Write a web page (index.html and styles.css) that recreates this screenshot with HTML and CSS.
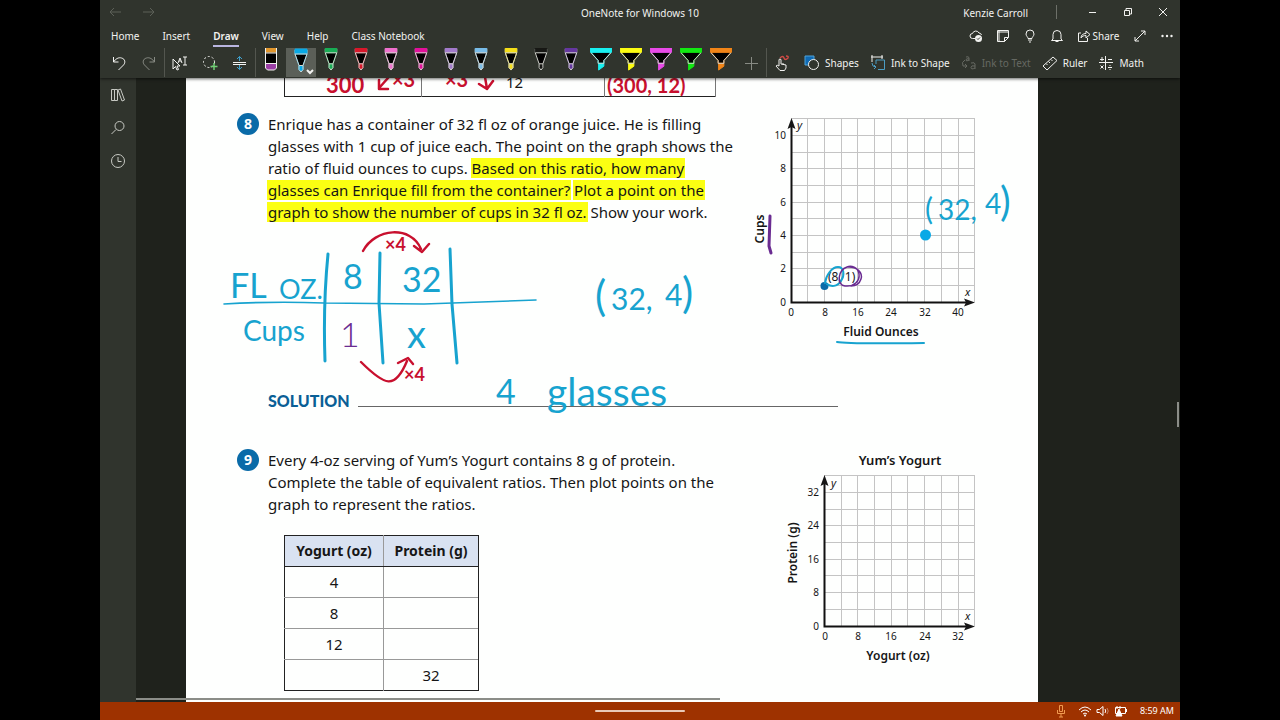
FILE: index.html
```html
<!DOCTYPE html>
<html lang="en">
<head>
<meta charset="utf-8">
<title>OneNote for Windows 10</title>
<link rel="stylesheet" href="styles.css">
</head>
<body>
<svg class="defs" aria-hidden="true">
  <defs>
    <symbol id="pen" viewBox="0 0 14 24">
      <path d="M1 5 5 16.500v4L7 23l2-2.500v-4L13 5z" fill="#000"/>
      <path d="M5.200 16.500h3.600v4L7 23l-1.800-2.500z" fill="currentColor"/>
      <path d="M1 1v4l4 11.500v4L7 23l2-2.500v-4L13 5V1M5 16.500h4" fill="none" stroke="#d4d6d0"/>
      <path d="M1 0h12v4.500H1z" fill="currentColor"/>
      <path d="M1 5h12" stroke="#d4d6d0"/>
    </symbol>
    <symbol id="marker" viewBox="0 0 22 24">
      <path d="M1 4v1l7 8v3h6v-3l7-8V4z" fill="#000"/>
      <path d="M8.500 16h5.500v3l-5.500 4z" fill="currentColor"/>
      <path d="M1 4v1.500l7 7.500v3h6v-3l7-7.500V4" fill="none" stroke="#d4d6d0"/>
      <path d="M0 0h22v4.500H0z" fill="currentColor"/>
    </symbol>
  </defs>
</svg>
<div class="app">
  <header class="chrome">
    <div class="titlebar">
      <div class="history">
        <button aria-label="Back"><svg width="14" height="10" viewBox="0 0 14 10"><path d="M5 1 1 5l4 4M1 5h11"/></svg></button>
        <button aria-label="Forward"><svg width="14" height="10" viewBox="0 0 14 10"><path d="m8 1 4 4-4 4M12 5H1"/></svg></button>
      </div>
      <div class="title">OneNote for Windows 10</div>
      <div class="window">
        <span class="user">Kenzie Carroll</span>
        <button aria-label="Minimize"><svg width="10" height="10" viewBox="0 0 10 10"><path d="M1 5.500h7"/></svg></button>
        <button aria-label="Restore"><svg width="10" height="10" viewBox="0 0 10 10"><path d="M1.500 3.500h5v5h-5zM3 3V1.500h5.500V7H7"/></svg></button>
        <button aria-label="Close"><svg width="10" height="10" viewBox="0 0 10 10"><path d="m1 1 8 8M9 1 1 9"/></svg></button>
      </div>
    </div>
    <div class="tabbar">
      <nav class="tabs">
        <button>Home</button><button>Insert</button><button class="active">Draw</button><button>View</button><button>Help</button><button>Class Notebook</button>
      </nav>
      <div class="actions">
        <button aria-label="Sync"><svg width="14" height="14" viewBox="0 0 14 14"><path d="M6 9.500H3.500a2.500 2.500 0 0 1 0-5 3.500 3.500 0 0 1 6.500-.5 2.600 2.600 0 0 1 2.500 2"/><circle cx="9.500" cy="9.500" r="3.500" fill="#f2f2f0" stroke="none"/><path d="m8 9.500 1 1 2-2" stroke="#30342d"/></svg></button>
        <button aria-label="Feed"><svg width="14" height="14" viewBox="0 0 14 14"><path d="M1.500 1.500h11v7l-4 4h-7zM12.500 8.500h-4v4M1.500 3h11M3 2v10"/></svg></button>
        <button aria-label="Tell me"><svg width="14" height="14" viewBox="0 0 14 14"><path d="M5 9.500C5 8 3 7 3 5a4 4 0 0 1 8 0c0 2-2 3-2 4.500zM5 11h4M6 13h2"/></svg></button>
        <button aria-label="Notifications"><svg width="14" height="14" viewBox="0 0 14 14"><path d="M3 10V5.500a4 4 0 0 1 8 0V10l1.500 1.500h-11zM5.500 12.500h3"/></svg></button>
        <button class="share"><svg width="14" height="14" viewBox="0 0 14 14"><path d="M4 4H1.500v8.500h9V9M4 9c0-3 2-4.500 5-4.500V2l4 3.500L9 9V6.500C7 6.500 5 7 4 9z"/></svg>Share</button>
        <button aria-label="Full screen"><svg width="14" height="14" viewBox="0 0 14 14"><path d="m2 12 10-10M8 2h4v4M2 8v4h4"/></svg></button>
        <button aria-label="More"><svg width="14" height="14" viewBox="0 0 14 14"><g fill="#f2f2f0" stroke="none"><circle cx="2.500" cy="7" r="1.200"/><circle cx="7" cy="7" r="1.200"/><circle cx="11.500" cy="7" r="1.200"/></g></svg></button>
      </div>
    </div>
    <div class="tools">
      <button aria-label="Undo"><svg width="16" height="16" viewBox="0 0 16 16"><path d="M2.500 2v5h5M2.500 7c2-3 5-5 8-4 4 1 4 5 2 7l-5 5"/></svg></button>
      <button aria-label="Redo" class="dim"><svg width="16" height="16" viewBox="0 0 16 16"><path d="M13.500 2v5h-5M13.500 7c-2-3-5-5-8-4-4 1-4 5-2 7l5 5"/></svg></button>
      <button aria-label="Select objects or type text" class="sep"><svg width="16" height="16" viewBox="0 0 16 16"><path d="M1 4v10l2.500-2.500L5 15l1.500-.5L5 11h3zM6 8l2-5 2 5M7 6h2M11 2h4M13 2v8M11 10h4"/></svg></button>
      <button aria-label="Lasso select"><svg width="16" height="16" viewBox="0 0 16 16"><circle cx="7" cy="7" r="5.500" stroke-dasharray="2 2"/><path d="M12 8v7M8.500 11.500h7" stroke="#6fce74" stroke-width="1.500"/></svg></button>
      <button aria-label="Insert or remove space"><svg width="16" height="16" viewBox="0 0 16 16"><path d="M1 7.500h13M1 9.500h13"/><path d="M7.500 6V1.500M5 4l2.500-2.500L10 4M7.500 10v4.500M5 12l2.500 2.500L10 12" stroke="#3fa0cc"/></svg></button>
      <button aria-label="Eraser" class="sep top"><svg width="14" height="24" viewBox="0 0 14 24"><path d="M1.500 0h11v4.500h-11z" fill="#e0962c" stroke="none"/><path d="M1.500 5h11v10h-11z" fill="#000" stroke="none"/><path d="M1.500 15.500h11V20l-2 2h-7l-2-2z" fill="#9b3fa6"/><path d="M1.500 0v16M12.500 0v16M1.500 5h11"/></svg></button>
      <button aria-label="Light blue pen" class="top on"><svg class="c-blue" width="14" height="26"><use href="#pen"/></svg><svg class="chev" width="8" height="6" viewBox="0 0 8 6"><path d="m1 1 3 3 3-3"/></svg></button>
      <button aria-label="Green pen" class="top"><svg class="c-green" width="14" height="23"><use href="#pen"/></svg></button>
      <button aria-label="Red pen" class="top"><svg class="c-red" width="14" height="23"><use href="#pen"/></svg></button>
      <button aria-label="Pink pen" class="top"><svg class="c-pink" width="14" height="23"><use href="#pen"/></svg></button>
      <button aria-label="Magenta pen" class="top"><svg class="c-magenta" width="14" height="23"><use href="#pen"/></svg></button>
      <button aria-label="Lavender pen" class="top"><svg class="c-lavender" width="14" height="23"><use href="#pen"/></svg></button>
      <button aria-label="Sky pen" class="top"><svg class="c-sky" width="14" height="23"><use href="#pen"/></svg></button>
      <button aria-label="Yellow pen" class="top"><svg class="c-yellow" width="14" height="23"><use href="#pen"/></svg></button>
      <button aria-label="Black pen" class="top"><svg class="c-black" width="14" height="23"><use href="#pen"/></svg></button>
      <button aria-label="Purple pen" class="top"><svg class="c-purple" width="14" height="23"><use href="#pen"/></svg></button>
      <button aria-label="Aqua highlighter" class="top"><svg class="c-aqua" width="22" height="23"><use href="#marker"/></svg></button>
      <button aria-label="Yellow highlighter" class="top"><svg class="c-lemon" width="22" height="23"><use href="#marker"/></svg></button>
      <button aria-label="Pink highlighter" class="top"><svg class="c-violet" width="22" height="23"><use href="#marker"/></svg></button>
      <button aria-label="Green highlighter" class="top"><svg class="c-lime" width="22" height="23"><use href="#marker"/></svg></button>
      <button aria-label="Orange highlighter" class="top"><svg class="c-orange" width="22" height="23"><use href="#marker"/></svg></button>
      <button aria-label="Add pen" class="dim"><svg width="14" height="14" viewBox="0 0 14 14"><path d="M7.500 1v13M1 7.500h13"/></svg></button>
      <button aria-label="Draw with touch" class="sep"><svg width="16" height="16" viewBox="0 0 16 16"><path d="M5 11V4.500q1-1 2 0V9l5 1v3l-1.500 2.500H6L2 11q1-1.500 3 0M9 9.500V8"/><path d="M6 3q3-3 4 0t4 0q1-2-2-2" stroke="#d04a45" stroke-width="1.400"/></svg></button>
      <button class="wide"><svg width="16" height="16" viewBox="0 0 16 16"><path d="M1 1h9v9H1z" fill="#0f6ab4" stroke="#4fa2d8"/><circle cx="9.500" cy="9.500" r="5" fill="#30342d"/></svg>Shapes</button>
      <button class="wide"><svg width="16" height="16" viewBox="0 0 16 16"><path d="M1 2h12M2 0v4M12 0v4M2 4v3"/><path d="M6 5h8.500v9.500H8M6 5v4M2 8q0 4 4 4M4 10l2 2-2 2" stroke="#4b9dc4"/></svg>Ink to Shape</button>
      <button class="wide" disabled><svg width="16" height="16" viewBox="0 0 16 16"><path d="M5 2q3-1 3 1v3M8 4q-3-1-3 1t3 0M10 8q4-1 4 1v5M14 11q-4-1-4 1.500t4 .5M4 5q-4 2-2 6h4M4 9l2 2-2 2"/></svg>Ink to Text</button>
      <button class="wide"><svg width="16" height="16" viewBox="0 0 16 16"><path d="m1 11 10-9 4 3.500L5 15zM4 8.500l1.500 1.500M6.500 6.500 8 8M9 4.500l1.500 1.500"/></svg>Ruler</button>
      <button class="wide"><svg width="16" height="16" viewBox="0 0 16 16"><path d="M7.500 1v14M1 7.500h14M2 4.500h4M4 2v4M10 4.500h4M2.500 10.500l3 3M5.500 10.500l-3 3M10 12.500h4M12 10v1M12 14v1"/></svg>Math</button>
    </div>
  </header>
  <div class="body">
    <aside class="rail">
      <button aria-label="Notebooks"><svg width="16" height="14" viewBox="0 0 16 14"><path d="M1.500 1.500h3v11h-3zM4.500 1.500h3v11h-3zM8 2l2.500-1 4 11-2.500 1z"/></svg></button>
      <button aria-label="Search"><svg width="16" height="16" viewBox="0 0 16 16"><circle cx="9.500" cy="6" r="4.500"/><path d="M6 9.500 1.500 14"/></svg></button>
      <button aria-label="Recent"><svg width="16" height="16" viewBox="0 0 16 16"><circle cx="8" cy="8" r="6.500"/><path d="M8 4v4.500h3.500"/></svg></button>
    </aside>
    <main class="canvas">
      <article class="page">
        <table class="prior"><tr><td></td><td>12</td><td></td></tr></table>
        <section class="problem">
          <span class="badge">8</span>
          <p>Enrique has a container of 32 fl oz of orange juice. He is filling<br>glasses with 1 cup of juice each. The point on the graph shows the<br>ratio of fluid ounces to cups. <mark>Based on this ratio, how many</mark><br><mark>glasses can Enrique fill from the container?</mark> <mark>Plot a point on the</mark><br><mark>graph to show the number of cups in 32 fl oz.</mark> Show your work.</p>
          <svg class="graph" width="290" height="236" viewBox="740 110 290 236" role="img" aria-label="Graph of cups against fluid ounces">
            <path class="grid" d="M807.500 119v183M824.500 119v183M841.500 119v183M857.500 119v183M874.500 119v183M891.500 119v183M907.500 119v183M924.500 119v183M941.500 119v183M958.500 119v183M974.500 119v183M791 118.500h184M791 135.500h184M791 152.500h184M791 168.500h184M791 185.500h184M791 202.500h184M791 218.500h184M791 235.500h184M791 252.500h184M791 268.500h184M791 285.500h184"/>
            <path class="axis" d="M791.500 125v177.500H969"/>
            <path d="m791.500 118 4 11-4-2-4 2zM975 302.500l-11 4 2-4-2-4z"/>
            <g class="tick end"><text x="786" y="139">10</text><text x="786" y="172">8</text><text x="786" y="206">6</text><text x="786" y="239">4</text><text x="786" y="272">2</text><text x="786" y="306">0</text></g>
            <g class="tick mid"><text x="791" y="316">0</text><text x="825" y="316">8</text><text x="858" y="316">16</text><text x="891" y="316">24</text><text x="925" y="316">32</text><text x="958" y="316">40</text></g>
            <text class="var" x="797" y="129">y</text><text class="var" x="965" y="296">x</text>
            <text class="name" x="881" y="336">Fluid Ounces</text>
            <text class="name" transform="translate(764 229) rotate(-90)">Cups</text>
            <text class="coord" x="828" y="281">(8, 1)</text>
            <circle cx="824.500" cy="286" r="4" fill="#0a6ba8"/>
          </svg>
        </section>
        <div class="solution"><b>SOLUTION</b><span></span></div>
        <section class="problem">
          <span class="badge">9</span>
          <div>
            <p>Every 4-oz serving of Yum’s Yogurt contains 8 g of protein.<br>Complete the table of equivalent ratios. Then plot points on the<br>graph to represent the ratios.</p>
            <table class="ratios">
              <thead><tr><th scope="col">Yogurt (oz)</th><th scope="col">Protein (g)</th></tr></thead>
              <tbody>
                <tr><td>4</td><td></td></tr>
                <tr><td>8</td><td></td></tr>
                <tr><td>12</td><td></td></tr>
                <tr><td></td><td>32</td></tr>
              </tbody>
            </table>
          </div>
          <svg class="graph" width="290" height="222" viewBox="740 445 290 222" role="img" aria-label="Blank graph of protein against yogurt">
            <path class="grid" d="M841.500 475v150M857.500 475v150M874.500 475v150M891.500 475v150M907.500 475v150M924.500 475v150M941.500 475v150M958.500 475v150M974.500 475v150M824 474.500h151M824 491.500h151M824 508.500h151M824 524.500h151M824 541.500h151M824 558.500h151M824 574.500h151M824 591.500h151M824 608.500h151"/>
            <path class="axis" d="M824.500 481v144.500H969"/>
            <path d="m824.500 474 4 11-4-2-4 2zM975 625.500l-11 4 2-4-2-4z"/>
            <g class="tick end"><text x="819" y="495">32</text><text x="819" y="528">24</text><text x="819" y="562">16</text><text x="819" y="595">8</text><text x="819" y="629">0</text></g>
            <g class="tick mid"><text x="825" y="639">0</text><text x="858" y="639">8</text><text x="891" y="639">16</text><text x="925" y="639">24</text><text x="958" y="639">32</text></g>
            <text class="var" x="831" y="486">y</text><text class="var" x="965" y="619">x</text>
            <text class="name large" x="900" y="464">Yum’s Yogurt</text>
            <text class="name" x="898" y="659">Yogurt (oz)</text>
            <text class="name" transform="translate(797 552) rotate(-90)">Protein (g)</text>
          </svg>
        </section>
        <svg class="ink" width="852" height="624" viewBox="186 78 852 624">
          <g class="lines blue">
            <path d="M224 304q50-3 100-1l100 1q60-2 112-4" stroke-width="1.600"/>
            <path d="M328 254q-5 50-3 107M380 253l-1 50 4 60M450 249l2 55 5 59" stroke-width="3"/>
            <path d="M837 342q10 2 87 1" stroke-width="2"/>
            <path d="M825 283c1-8 7-16 13-16s7 8 3 14-10 6-14 3" stroke-width="2"/>
          </g>
          <circle cx="925.500" cy="235" r="5.500" fill="#08a9e6" stroke="none"/>
          <g class="lines red">
            <path d="M363 251c12-23 48-26 58-2M414 246l8 6 7-8M361 362c24 24 34 28 46-1M398 363l10-5 5 6" stroke-width="2.400"/>
            <path d="m388 78-8 9M379 80v9h9M485 77l2 12M479 84l8 5 6-8" stroke-width="2.500"/>
          </g>
          <g class="lines purple">
            <path d="M770 216l-1 30 2 7" stroke-width="3"/>
            <path d="M847 267c-9 3-11 18-2 19 9 1 15-5 14-12s-8-9-12-7c10-1 16 6 14 12s-6 7-10 7" stroke-width="1.500"/>
          </g>
          <g class="blue-text">
            <text x="230" y="298" font-size="34">FL</text><text x="279" y="299" font-size="27">OZ.</text>
            <text x="243" y="341" font-size="28">Cups</text>
            <text x="343" y="289" font-size="34">8</text><text x="402" y="292" font-size="34">32</text>
            <text x="407" y="348" font-size="38">x</text>
            <text x="595" y="311" font-size="42">(<tspan x="611" y="310" font-size="30">32,</tspan> <tspan x="665" y="306" font-size="30">4</tspan><tspan x="682" y="308" font-size="42">)</tspan></text>
            <text x="496" y="404" font-size="34">4</text><text x="547" y="406" font-size="39">glasses</text>
            <text x="925" y="220" font-size="30">(<tspan x="938" y="220" font-size="28">32,</tspan> <tspan x="985" y="214" font-size="28">4</tspan><tspan x="1000" y="216" font-size="40">)</tspan></text>
          </g>
          <text class="purple-text" x="340" y="347" font-size="34">1</text>
          <g class="red-text">
            <text x="326" y="93" font-size="22">300</text><text x="392" y="87" font-size="20">×3</text>
            <text x="445" y="87" font-size="20">×3</text><text x="607" y="93" font-size="20">(300, 12)</text>
            <text x="385" y="251" font-size="18">×4</text><text x="404" y="381" font-size="18">×4</text>
          </g>
        </svg>
      </article>
      <div class="hscroll"></div>
      <div class="vscroll"></div>
    </main>
  </div>
  <footer class="taskbar">
    <span class="swipe"></span>
    <div class="tray">
      <svg class="mic" width="10" height="14" viewBox="0 0 10 14"><path d="M3.500 1.500h3v6h-3zM1.500 6v3.500h7V6M5 9.500V13M3 13h4"/></svg>
      <svg width="14" height="12" viewBox="0 0 14 12"><path d="M1 5q6-6 12 0M3 7q4-4 8 0M5 9q2-2 4 0"/><circle cx="7" cy="10.500" r="1" fill="#fff" stroke="none"/></svg>
      <svg width="14" height="12" viewBox="0 0 14 12"><path d="M1 4.500h2.500L7 1.500v9l-3.500-3H1zM9 4q1.500 2 0 4"/><path d="M11 3q2.500 3 0 6" opacity=".4"/></svg>
      <svg width="14" height="12" viewBox="0 0 14 12"><path d="M1.500 2.500h10v6h-10zM12.500 4v3M3 1v3M6 1v3M4.500 5v6"/><path d="m5 4-3 7h6z" fill="#fff"/></svg>
      <time>8:59 AM</time>
    </div>
  </footer>
</div>
</body>
</html>
```
FILE: styles.css
```css
* { box-sizing: border-box; }
body { margin: 0; background: #000; color: #f2f2f0; font: 10px/16px "Noto Sans", "Open Sans", sans-serif; }
button { margin: 0; padding: 0; border: 0; background: none; color: inherit; font: inherit; display: flex; align-items: center; justify-content: center; }
svg { display: block; flex: none; fill: none; stroke: currentColor; }
svg text { stroke: none; }
.defs { position: absolute; width: 0; height: 0; }
.app { height: 100vh; margin: 0 100px; display: flex; flex-direction: column; overflow: hidden; background: #1f221c; }

.chrome { flex: none; position: relative; z-index: 2; background: #30342d; box-shadow: 0 1px 3px #0009; }
.titlebar { height: 24px; display: grid; grid-template-columns: 1fr auto 1fr; align-items: center; }
.history { display: flex; gap: 19px; padding-left: 9px; color: #5d6159; }
.title { padding-top: 2px; }
.window { display: flex; align-items: center; justify-content: flex-end; }
.window button { width: 35px; height: 24px; }
.user { padding-right: 28px; margin-right: 18px; padding-top: 2px; border-right: 1px solid #6d7069; line-height: 12px; }
.tabbar { height: 24px; display: flex; justify-content: space-between; }
.tabs { display: flex; gap: 23px; padding-left: 11px; }
.tabs button { border-bottom: 2px solid transparent; height: 23px; padding-top: 2px; }
.tabs .active { font-weight: 600; border-color: #b9b5e0; }
.actions { display: flex; }
.actions button { width: 27px; height: 24px; }
.actions .share { width: 56px; gap: 2px; }

.tools { height: 30px; display: flex; padding-left: 4px; }
.tools button { flex: none; width: 30px; height: 29px; }
.tools .sep { border-left: 1px solid #53564f; width: 31px; }
.tools .dim { color: #888b84; }
.tools .top { align-items: flex-start; position: relative; }
.tools .on { background: #5b5f58; }
.chev { position: absolute; right: 2px; bottom: 2px; stroke-width: 2; }
.tools .wide { width: auto; gap: 5px; margin-left: 7px; padding-right: 4px; }
.tools button:disabled { color: #666962; }
.c-blue { color: #08a9e6; }
.c-green { color: #18ad55; }
.c-red { color: #d9172b; }
.c-pink { color: #f070ce; }
.c-magenta { color: #e3109b; }
.c-lavender { color: #a27acb; }
.c-sky { color: #78bce9; }
.c-yellow { color: #f5df18; }
.c-black { color: #171815; }
.c-purple { color: #6537a0; }
.c-aqua { color: #18f0f0; }
.c-lemon { color: #fcfc12; }
.c-violet { color: #e84ae8; }
.c-lime { color: #12e812; }
.c-orange { color: #f18518; }

.body { flex: 1; min-height: 0; display: flex; }
.rail { width: 36px; flex: none; background: #30342d; color: #c7c9c3; }
.rail button { width: 36px; height: 33px; }
.canvas { flex: 1; min-width: 0; position: relative; display: flex; padding: 0 142px 0 50px; }
.page { flex: 1; min-width: 0; position: relative; overflow: hidden; background: #fefffe; color: #161616; }
.prior { margin: -12px 0 0 98px; width: 432px; height: 31px; border-collapse: collapse; border: 1px solid #222; font-size: 15px; table-layout: fixed; }
.prior td { border-right: 1px solid #777; padding: 0 0 0 84px; }
.prior td:nth-child(1) { width: 137px; }
.prior td:nth-child(2) { width: 183px; }
.problem { display: grid; grid-template-columns: 22px minmax(0, 1fr) 298px; padding: 0 0 0 51px; align-items: start; }
.prior + .problem { margin-top: 16px; }
.badge { width: 22px; height: 22px; border-radius: 50%; background: #0a6ba8; color: #fff; font-weight: 700; font-size: 14px; line-height: 22px; text-align: center; }
.problem p { margin: 0 0 0 9px; font-size: 15px; line-height: 22px; white-space: nowrap; }
mark { background: #fbff12; color: inherit; padding: 0 1px; margin: 0 -1px; }
.graph { fill: #161616; stroke: none; margin-top: -3px; }
.grid { stroke: #c4c4c4; fill: none; }
.axis { stroke: #111; stroke-width: 2; fill: none; }
.tick { font-size: 10px; }
.end { text-anchor: end; }
.mid { text-anchor: middle; }
.var { font-size: 11px; font-style: italic; }
.name { font-size: 12px; font-weight: 600; text-anchor: middle; }
.large { font-size: 13px; }
.coord { font-size: 12px; }
.solution { display: flex; height: 20px; margin: 45px 200px 0 82px; gap: 8px; align-items: center; }
.solution b { color: #0a5f96; font-family: Lato, sans-serif; font-size: 16px; font-weight: 900; }
.solution span { flex: 1; height: 1px; background: #666; margin-top: 10px; }
.solution + .problem { margin-top: 38px; }
.ratios { margin: 20px 0 0 25px; width: 195px; table-layout: fixed; border-collapse: collapse; border: 1px solid #222; font-size: 15px; line-height: 20px; text-align: center; }
.ratios th { background: #d9e2f1; height: 31px; padding: 0; font-size: 14px; font-weight: 700; border-bottom: 1px solid #222; border-right: 1px solid #999; }
.ratios th:first-child { width: 99px; }
.ratios td { height: 31px; padding: 0; border-top: 1px solid #999; border-right: 1px solid #999; }
.ratios tr > :last-child { border-right-color: #222; }
.ink { position: absolute; left: 0; top: 0; pointer-events: none; font-family: Lato, sans-serif; }
.lines { stroke-linecap: round; stroke-linejoin: round; }
.blue { stroke: #17a3cf; }
.red { stroke: #c8102e; }
.purple { stroke: #6a2c91; }
.blue-text { fill: #17a3cf; }
.red-text { fill: #c8102e; font-weight: 700; }
.purple-text { fill: #6a2c91; font-weight: 300; }
.hscroll { position: absolute; left: 0; right: 460px; bottom: 2px; height: 2px; background: #8b8d88; }
.vscroll { position: absolute; right: 1px; top: 52%; width: 2px; height: 25px; background: #8b8d88; }

.taskbar { flex: none; height: 18px; display: grid; grid-template-columns: 1fr 90px 1fr; align-items: center; background: #9e3200; color: #fff; font-size: 9px; }
.swipe { grid-column: 2; height: 2px; border-radius: 1px; background: #e9c9b8; }
.tray { display: flex; justify-content: flex-end; align-items: center; gap: 4px; padding-right: 6px; }
.mic { color: #f09a50; margin-right: 8px; }
.tray time { margin-left: 8px; }
```
